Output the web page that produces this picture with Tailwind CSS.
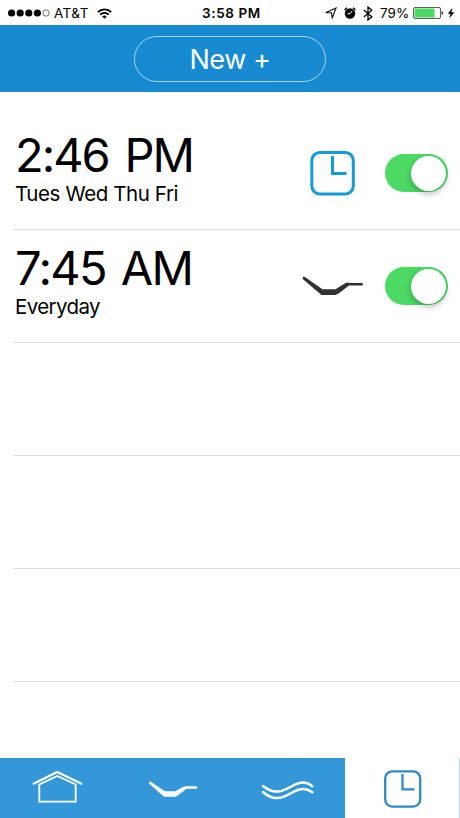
<!DOCTYPE html>
<html lang="en">
<head>
  <meta charset="UTF-8" />
  <meta name="viewport" content="width=device-width, initial-scale=1.0"/>
  <title>Alarms</title>
  <script src="https://cdn.jsdelivr.net/npm/@tailwindcss/browser@4"></script>
</head>
<body class="flex h-[818px] w-[460px] flex-col overflow-hidden bg-white font-['Inter',sans-serif] text-black">
  <!-- Status bar -->
  <div class="grid h-[25px] shrink-0 grid-cols-[1fr_auto_1fr] items-center pr-[5px] pl-[8px] text-[13.5px] leading-[25px]">
    <div class="flex items-center">
      <svg class="h-[8px] w-[42px]" viewBox="0 0 42 8">
        <circle cx="3.6" cy="4" r="3.6"/>
        <circle cx="12.2" cy="4" r="3.6"/>
        <circle cx="20.8" cy="4" r="3.6"/>
        <circle cx="29.4" cy="4" r="3.6"/>
        <circle cx="38" cy="4" r="3.2" fill="none" stroke="#333" stroke-width=".7"/>
      </svg>
      <span class="ml-[4px] w-[37px] pt-px whitespace-nowrap tracking-[0.45px]">AT&amp;T</span>
      <svg class="ml-[6px] h-[11px] w-[15px]" viewBox="0 0 15 11" fill="none" stroke="#000" stroke-width="1.8">
        <path d="M.8 4.2a9.5 9.5 0 0 1 13.4 0M3.2 6.7a6.1 6.1 0 0 1 8.6 0"/>
        <path d="M7.5 10.8 5.2 8.5a3.3 3.3 0 0 1 4.6 0z" fill="#000" stroke="none"/>
      </svg>
    </div>
    <span class="pt-px font-semibold tracking-[0.6px]">3:58 PM</span>
    <div class="flex items-center justify-end">
      <svg class="h-[12px] w-[12px]" viewBox="0 0 12 12" fill="none" stroke="#111" stroke-width="1.1">
        <path d="M11 1 .9 5.6l5.6.2.8 5.2z"/>
      </svg>
      <svg class="ml-[7px] h-[12px] w-[12px]" viewBox="0 0 12 12">
        <circle cx="6" cy="6.5" r="5.2"/>
        <path d="M.5 3 3 .8M11.5 3 9 .8" stroke="#000" stroke-width="1.4"/>
        <path d="M8.3 3.8 6 6.8H3.4" fill="none" stroke="#fff" stroke-width="1"/>
      </svg>
      <svg class="ml-[7px] h-[15px] w-[10px]" viewBox="0 0 10 15" fill="none" stroke="#000" stroke-width="1.3">
        <path d="M.8 4 8.8 10.8 5 14V1l3.8 3.2L.8 11"/>
      </svg>
      <span class="ml-[7px] w-[31px] pt-px whitespace-nowrap tracking-[0.1px]">79%</span>
      <svg class="ml-[2px] h-[12px] w-[31px]" viewBox="0 0 31 12">
        <rect x=".5" y=".5" width="27" height="11" rx="1.5" fill="#fff" stroke="#333" stroke-width=".8"/>
        <rect x="1.5" y="1.5" width="20" height="9" fill="#4cd964"/>
        <path d="M28.7 4c1.7.7 1.7 3.3 0 4z"/>
      </svg>
      <svg class="ml-[3px] h-[12px] w-[8px]" viewBox="0 0 8 12">
        <path d="M5.5.8.8 6.8h2.7L2.3 11.5 7.3 5.2H4.4z"/>
      </svg>
    </div>
  </div>

  <!-- Header -->
  <header class="flex h-[67px] shrink-0 items-center justify-center bg-[#178ad2]">
    <button class="h-[46px] w-[192px] rounded-full border border-[#a5dafa] pt-[1px] text-[27px] leading-[43px] tracking-[-0.4px] text-white">New +</button>
  </header>

  <!-- Alarm list -->
  <main class="flex-1 pt-[25px] pl-[13px]">
    <div class="flex h-[113px] items-center border-b border-[#dfdfdf] pr-[12px] pl-[2px]">
      <div class="flex-1 pb-[8px] whitespace-nowrap">
        <div class="text-[47px] leading-[49px] tracking-[-2px] [word-spacing:4.5px]">2:46 PM</div>
        <div class="text-[20.5px] leading-[30px] tracking-[-0.4px]">Tues Wed Thu Fri</div>
      </div>
      <svg class="mr-[30px] h-[45px] w-[45px]" viewBox="0 0 45 45" fill="none" stroke="#159bd7" stroke-width="3">
        <rect x="1.8" y="1.5" width="41.5" height="41.5" rx="8"/>
        <path d="M22.5 5v17.5h14"/>
      </svg>
      <div class="flex h-[38px] w-[63px] items-center justify-end rounded-full bg-[#4cd964] pr-[2px]">
        <div class="size-[35px] rounded-full bg-white shadow-[0_3px_6px_rgba(0,0,0,0.25)]"></div>
      </div>
    </div>
    <div class="flex h-[113px] items-center border-b border-[#dfdfdf] pr-[12px] pl-[2px]">
      <div class="flex-1 pb-[8px] whitespace-nowrap">
        <div class="text-[47px] leading-[49px] tracking-[-1.6px] [word-spacing:3px]">7:45 AM</div>
        <div class="text-[20.5px] leading-[30px] tracking-[-0.6px]">Everyday</div>
      </div>
      <svg class="mr-[22px] h-[20px] w-[61px]" viewBox="0 0 61 20" fill="#303133">
        <path d="M2.2.6 20.5 13.3h13L43.5 7q1-.6 2.2-.6l2 .6h12q1.3 0 1.3 1.3t-1.3 1.3H47L37 17.2l-3.5 1.8h-14L1 3.2Q-.2 1 2.2.6z"/>
      </svg>
      <div class="flex h-[38px] w-[63px] items-center justify-end rounded-full bg-[#4cd964] pr-[2px]">
        <div class="size-[35px] rounded-full bg-white shadow-[0_3px_6px_rgba(0,0,0,0.25)]"></div>
      </div>
    </div>
    <div class="h-[113px] border-b border-[#dfdfdf]"></div>
    <div class="h-[113px] border-b border-[#dfdfdf]"></div>
    <div class="h-[113px] border-b border-[#dfdfdf]"></div>
  </main>

  <!-- Tab bar -->
  <nav class="grid h-[60px] shrink-0 grid-cols-4 bg-[#3498d8]">
    <a class="flex items-center justify-center">
      <svg class="h-[60px] w-[115px]" viewBox="0 0 115 60" fill="none" stroke="#fff" stroke-width="2">
        <path d="M33 26 57.3 14 82 26" stroke-width="2.2"/>
        <path d="M39.3 26.5v17.2h36.4V26.5L57.3 18z" stroke-width="1.8"/>
      </svg>
    </a>
    <a class="flex items-center justify-center">
      <svg class="h-[60px] w-[115px]" viewBox="0 0 115 60" fill="#fff">
        <path d="M35.2 23.5 50 33.3h10.2l8.3-4.5q1-.7 2.3-.5H81q1.3 0 1.3 1.2t-1.3 1.2H71.5L63 37.3l-2.5 1.5H49L34 25.5q-.7-1.7 1.2-2z"/>
      </svg>
    </a>
    <a class="flex items-center justify-center">
      <svg class="h-[60px] w-[115px]" viewBox="0 0 115 60" fill="none" stroke="#fff" stroke-width="2.4" stroke-linecap="round">
        <path d="M33 28C38 32 43 34 48 33.5 59 32.5 64 24 74 24.5q4.5.3 8.3 3.8"/>
        <path d="M33 34C38 38.500 43 40.500 48 40 59 39 64 30.500 74 31q4.500.3 8.300 3.300"/>
      </svg>
    </a>
    <a class="flex items-center justify-center border-r border-[#a9d3ee] bg-white">
      <svg class="h-[60px] w-[114px]" viewBox="0 0 114 60" fill="none" stroke="#3089c4" stroke-width="2.3">
        <rect x="40.2" y="13.3" width="35" height="35.3" rx="7"/>
        <path d="M57.5 16v15.3h12"/>
      </svg>
    </a>
  </nav>
</body>
</html>
